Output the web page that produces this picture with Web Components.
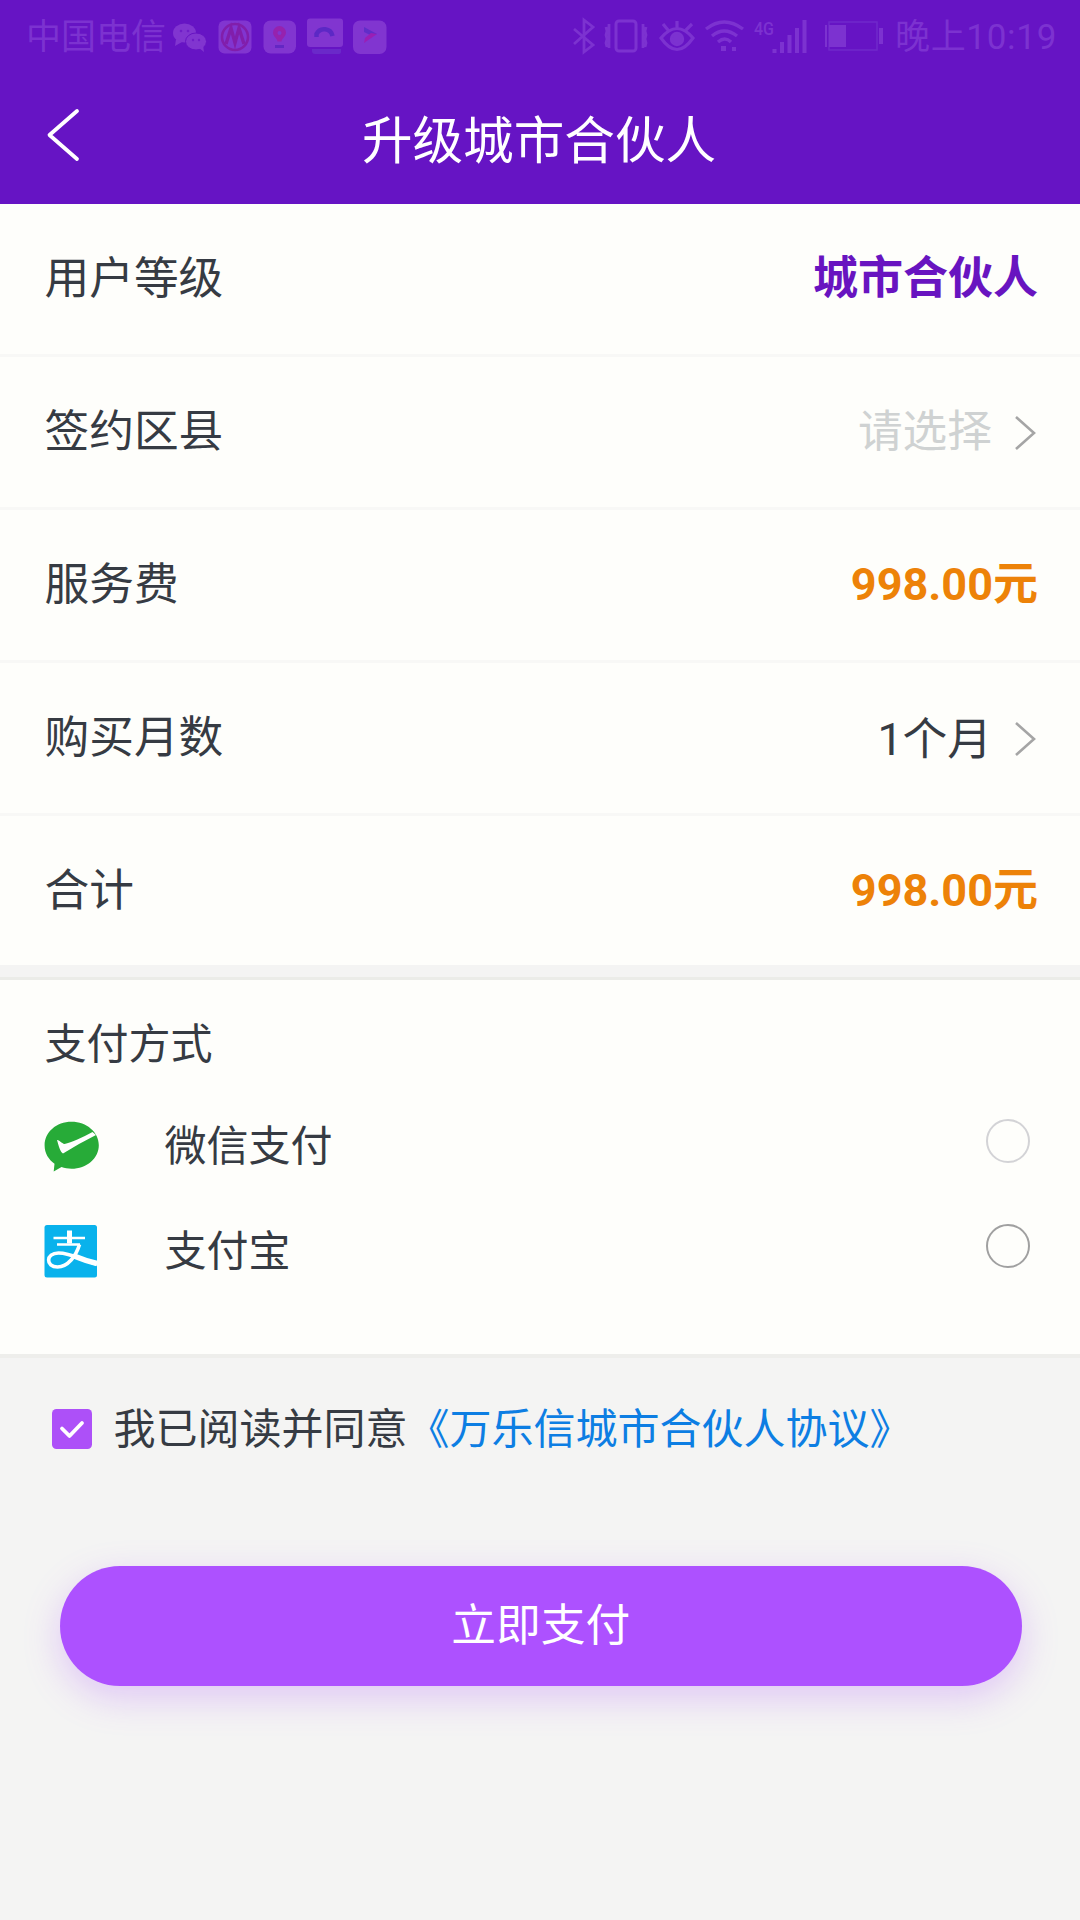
<!DOCTYPE html>
<html lang="zh-CN">
<head>
<meta charset="utf-8">
<title>升级城市合伙人</title>
<style>
html, body { margin: 0; background: #f4f4f3; }
body { font-family: Roboto, "Noto Sans CJK SC", sans-serif; color: #363b43; }
</style>
</head>
<body>
<upgrade-page></upgrade-page>
<script>
const define = (name, html) => {
  const template = document.createElement('template');
  template.innerHTML = html;
  customElements.define(name, class extends HTMLElement {
    constructor() {
      super();
      this.attachShadow({ mode: 'open' }).append(template.content.cloneNode(true));
    }
  });
};

define('status-bar', `
<style>
:host { display: flex; align-items: flex-start; justify-content: space-between; height: 72px; box-sizing: border-box; padding: 10px 23px 0 26px; color: #7c32d0; font-size: 35px; line-height: 56px; white-space: nowrap; }
div { display: flex; }
svg { display: block; width: 220px; height: 60px; }
.left svg { margin-left: 3px; opacity: .9; }
.right svg { width: 330px; margin-right: 5px; }
.right span { letter-spacing: .7px; }
</style>
<div class="left"><span>中国电信</span>
<svg viewBox="170 10 220 60">
  <g fill="#8439d2"><ellipse cx="185.500" cy="33" rx="11.500" ry="9.500"/><path d="M177 39l-1 7 7-4z"/><ellipse cx="197" cy="41.500" rx="10.500" ry="8.500" stroke="#6814c4" stroke-width="1"/><path d="M200 48l5 4-1-7z"/>
  <rect x="219.500" y="20.500" width="33" height="33" rx="6"/><rect x="264.500" y="20.500" width="32.500" height="33" rx="7"/><rect x="308" y="18.500" width="36" height="28.500" rx="3"/><rect x="354" y="20.500" width="33.500" height="33.500" rx="7"/></g>
  <g fill="#7020c8"><circle cx="182" cy="31" r="1.300"/><circle cx="189" cy="31" r="1.300"/><circle cx="194" cy="40" r="1.200"/><circle cx="200" cy="40" r="1.200"/></g>
  <g fill="none" stroke="#8520a9" stroke-width="2.600"><circle cx="236" cy="37" r="13"/><path d="M227 44l5-16 4 15 4-15 5 16" stroke-width="3.400"/></g>
  <path d="M280.500 26a6.500 6.500 0 016.500 6.500c0 4-4 5.500-4.500 9h-4c-.5-3.500-4.500-5-4.500-9a6.500 6.500 0 016.500-6.500z" fill="#9c24ac"/><circle cx="280.500" cy="33" r="2" fill="#8439d2"/><path d="M276 46.500h9" stroke="#632ac4" stroke-width="3"/>
  <path d="M317.500 37v-3a8.500 8.500 0 0116 2" fill="none" stroke="#5c2bc6" stroke-width="4.500"/><path d="M313 49h29v3q0 2-3 2h-23q-3 0-3-3z" fill="#6b2cca"/>
  <path d="M365 27l13 7-5 2-8-4z" fill="#6030c9"/><path d="M378 34l-13 9 1-5 6-5z" fill="#a020b4"/>
</svg></div>
<div class="right"><svg viewBox="560 10 330 60" fill="none" stroke="#7c32d0" stroke-width="2.800">
  <path d="M574 29l19 16-9 7V20l9 7-19 17"/>
  <rect x="616" y="21" width="20" height="30" rx="3" stroke-width="3"/><path d="M609 24v24M606 27l1 4-1 4 1 4-1 4 1 4M643 24v24M646 27l-1 4 1 4-1 4 1 4-1 4"/>
  <path d="M661 38q16-19 32 0-16 23-32 0zM677 28v-7M668 30l-5-6M686 30l6-6" stroke-width="3.200"/><circle cx="677" cy="39" r="5.800" fill="#7c32d0"/>
  <g stroke-width="3.400"><path d="M706 29q18-14 37 0M712 36q12-10 25 0M718 42q7-6 13 0"/></g><path d="M721 46h5v5h-5zM732 47h4v4h-4z" fill="#7c32d0" stroke="none"/>
  <text x="754" y="35" fill="#7c32d0" stroke="none" font-family="Roboto, sans-serif" font-size="18" font-weight="500" textLength="20" lengthAdjust="spacingAndGlyphs">4G</text>
  <path d="M774.500 49v4M782 42v11M789.500 35v18M797 28v25M804.500 20v33" stroke-width="4"/>
  <path d="M829 22h48v28h-48z" stroke="#7028ca" stroke-width="1.500"/><path d="M829 25h17v22h-17z" fill="#7c32d0" stroke="none"/><path d="M826 25v22" stroke-width="2"/><path d="M881 28v16" stroke-width="4"/>
</svg><span>晚上10:19</span></div>`);

define('nav-bar', `
<style>
:host { display: grid; grid-template-columns: 120px 1fr 120px; height: 132px; }
svg { display: block; width: 34px; height: 56px; margin: 35px 0 0 46px; }
h1 { margin: 0 1px 0 -1px; padding-top: 4px; font-weight: 400; font-size: 50.600px; line-height: 132px; text-align: center; color: #fff; }
</style>
<svg viewBox="47 107 34 56"><path d="M78 111L50.500 135 78 159" fill="none" stroke="#fff" stroke-width="3.800" stroke-linecap="round" stroke-linejoin="round"/></svg>
<h1><slot></slot></h1>`);

define('info-row', `
<style>
:host { display: flex; align-items: center; justify-content: space-between; box-sizing: border-box; height: 153px; padding: 0 42px 1px 44.500px; border-bottom: 3px solid #f8f8f6; font-size: 44.700px; line-height: 60px; }
:host([last]) { height: 149px; border: 0; padding-bottom: 0; }
.value { display: flex; align-items: center; }
svg { display: none; width: 22px; height: 34px; margin: 2px 2.500px 0 21.500px; }
:host([arrow]) svg { display: block; }
::slotted(b) { font-weight: 700; font-size: 45px; color: #ed8208; }
::slotted(b.level) { color: #6814c0; }
::slotted(i) { font-style: normal; color: #cfd2d2; }
::slotted(span.months) { padding-top: 4px; }
</style>
<div><slot name="label"></slot></div>
<div class="value"><slot></slot><svg viewBox="0 0 22 34"><path d="M2 1l18 16L2 33" fill="none" stroke="#a5a5a5" stroke-width="2.600"/></svg></div>`);

define('pay-option', `
<style>
:host { display: flex; align-items: center; height: 105px; font-size: 42px; line-height: 60px; }
.icon { width: 120px; height: 54px; }
.icon ::slotted(svg) { margin-left: -1px; }
.label { flex: 1; padding-top: 3px; }
.radio { box-sizing: border-box; width: 44px; height: 44px; border-radius: 50%; border: 2px solid var(--ring, #d3d3d6); margin-bottom: 9px; }
::slotted(svg) { display: block; width: 56px; height: 54px; }
</style>
<div class="icon"><slot name="icon"></slot></div><div class="label"><slot></slot></div><div class="radio"></div>`);

define('pay-panel', `
<style>
:host { display: block; box-sizing: border-box; height: 377px; padding: 0 50.500px 0 44.500px; background: #fefefb; border-top: 3px solid #ebece8; }
h2 { margin: 0; padding-top: 35px; font-weight: 400; font-size: 42px; line-height: 60px; }
.options { padding-top: 18px; --ring: #d3d3d6; }
.alipay { --ring: #a0a0a0; }
</style>
<h2>支付方式</h2>
<div class="options">
<pay-option><svg slot="icon" viewBox="44 1119 56 54"><path d="M71.500 1121.700c15.200 0 27.300 10.500 27.300 23.500s-12.100 23.500-27.300 23.500c-3.500 0-7-.5-10-1.600l-7.800 4.400.8-7.800c-6-4.300-9.900-10.500-9.900-18.500 0-13 11.700-23.500 26.900-23.500z" fill="#27ab38"/><path d="M57 1140c1.500-.6 4.500 3 7.500 4 7-1.500 18-6.500 28-12l3.500 3q-18 9-33 18.500c-2.500-1-4.500-8-6-13.500z" fill="#fff"/></svg>微信支付</pay-option>
<pay-option class="alipay"><svg slot="icon" viewBox="44 1224 56 54"><rect x="44.500" y="1225" width="52.500" height="52.500" rx="2.500" fill="#09b2ec"/><g fill="none" stroke="#fff"><path d="M53.500 1238h31.500M57 1244.500h23" stroke-width="2.600"/><path d="M69.500 1230.500v13" stroke-width="5"/><path d="M79.500 1244.500C76 1256 68 1267 57.500 1267c-12 0-12-14 1-14 13 0 25 8 38.500 11" stroke-width="3.600"/><path d="M74 1256q12 5 23 7.500" stroke-width="5.500"/></g></svg>支付宝</pay-option>
</div>`);

define('agree-line', `
<style>
:host { display: flex; align-items: flex-start; height: 60px; padding: 42px 0 0 51.500px; font-size: 42px; line-height: 60px; white-space: nowrap; }
svg { display: block; width: 40px; height: 40px; margin: 9px 22px 0 0; }
a { color: #0d7ee3; }
</style>
<svg viewBox="0 0 40 40"><rect width="40" height="40" rx="4.500" fill="#ad50f8"/><path d="M10 19.500l7.500 7.500L30 14" fill="none" stroke="#fff" stroke-width="3.800" stroke-linecap="round" stroke-linejoin="round"/></svg><span>我已阅读并同意<a>《万乐信城市合伙人协议》</a></span>`);

define('pay-button', `
<style>
:host { display: block; padding: 106px 58px 0 59.500px; }
button { display: block; width: 100%; height: 120px; border: 0; border-radius: 60px; padding: 0; background: #ad51ff; box-shadow: 0 12px 36px rgba(173,81,255,.28); color: #fff; font: 400 44.700px/120px Roboto, "Noto Sans CJK SC", sans-serif; }
</style>
<button><slot></slot></button>`);

define('upgrade-page', `
<style>
:host { display: flex; flex-direction: column; height: 1920px; overflow: hidden; background: #f4f4f3; }
header { background: #6614c4; height: 204px; }
.rows { background: #fefefb; height: 761px; margin-bottom: 12px; }
.agreement { border-top: 4px solid #eeeeeb; }
</style>
<header><status-bar></status-bar><nav-bar>升级城市合伙人</nav-bar></header>
<section class="rows">
<info-row><span slot="label">用户等级</span><b class="level">城市合伙人</b></info-row>
<info-row arrow><span slot="label">签约区县</span><i>请选择</i></info-row>
<info-row><span slot="label">服务费</span><b>998.00元</b></info-row>
<info-row arrow><span slot="label">购买月数</span><span class="months">1个月</span></info-row>
<info-row last><span slot="label">合计</span><b>998.00元</b></info-row>
</section>
<pay-panel></pay-panel>
<section class="agreement"><agree-line></agree-line><pay-button>立即支付</pay-button></section>`);
</script>
</body>
</html>
